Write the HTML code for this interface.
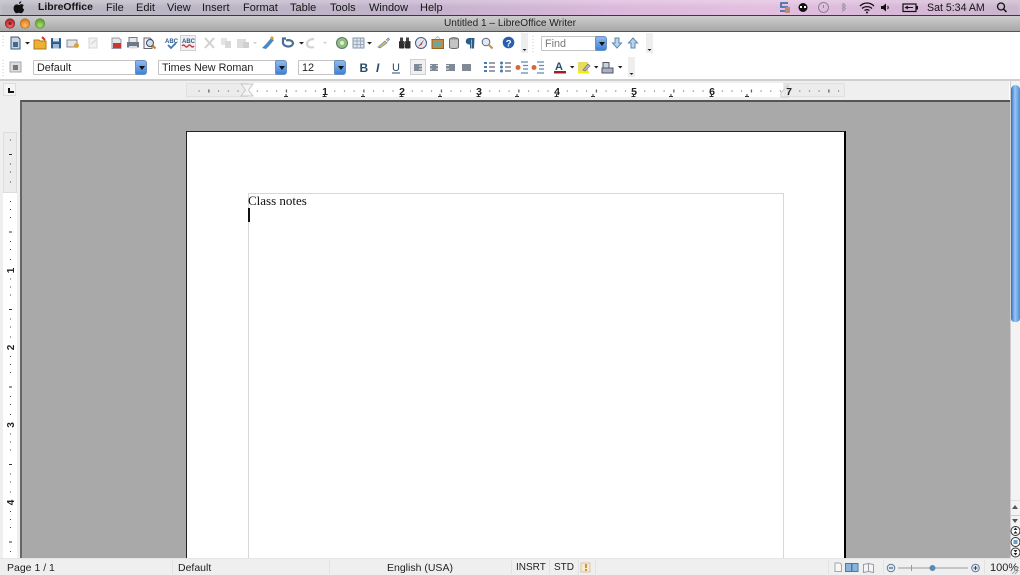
<!DOCTYPE html>
<html><head><meta charset="utf-8"><style>
html,body{margin:0;padding:0;width:1020px;height:575px;overflow:hidden;background:#fff}
body{position:relative;font-family:"Liberation Sans",sans-serif;font-size:11px;color:#1a1a1a;filter:blur(.3px)}
div,span{position:absolute;white-space:nowrap}
#menu{left:0;top:0;width:1020px;height:15px;background:linear-gradient(90deg,#b9b7c2 0,#bcb5c6 25%,#c3b2cc 40%,#dcb8dc 60%,#e3bfe0 75%,#d8b8d8 88%,#c9b6cc 100%);box-shadow:inset 0 4px 4px rgba(255,255,255,.25);border-bottom:1px solid #3a3a3a}
.m{top:1px;font-size:11px;line-height:14px;color:#151515}
#title{left:0;top:16px;width:1020px;height:15px;background:linear-gradient(#cdcdcd,#a8a8a8);border-bottom:1px solid #555;text-align:center;font-size:10.1px;line-height:15px;color:#222}
.combo{height:15px;background:#fff;border:1px solid #c4c4c4;box-sizing:border-box;font-size:10.8px;line-height:14px;padding-left:3px;color:#222;border-radius:1px}
.btn{width:12px;height:15px;background:linear-gradient(#8fb9ec,#3f82d8);border-radius:2px 3px 3px 2px;border:1px solid #6b8fbe;box-sizing:border-box}
.btn:after{content:"";position:absolute;left:2.5px;top:5px;border:3px solid transparent;border-top:4px solid #111;border-bottom:0}
.st{top:561px;font-size:10.5px;line-height:14px;color:#222}
</style></head><body>
<div id="menu"></div>
<svg style="position:absolute;left:13px;top:1px" width="12" height="13" viewBox="0 0 12 13"><path d="M8 3.2C9.2 3 10.3 3.6 10.8 4.4 9.2 5.4 9.5 7.800 11.200 8.500 10.600 10.200 9.400 12.300 8 12.300 7.100 12.300 6.800 11.800 5.800 11.800 4.800 11.800 4.400 12.300 3.600 12.300 2.100 12.300 .6 9.600 .6 7.400 .6 5 2.100 3.400 3.800 3.400 4.800 3.400 5.400 4 6 4 6.600 4 7 3.400 8 3.200ZM8.300 .3C8.400 1.600 7.200 3 6 2.900 5.900 1.700 7 .4 8.300 .3Z" fill="#111"/></svg>
<span class="m" style="left:38px;font-weight:bold;font-size:10.4px">LibreOffice</span>
<span class="m" style="left:106px">File</span>
<span class="m" style="left:136px">Edit</span>
<span class="m" style="left:167px">View</span>
<span class="m" style="left:202px">Insert</span>
<span class="m" style="left:243px">Format</span>
<span class="m" style="left:290px">Table</span>
<span class="m" style="left:330px">Tools</span>
<span class="m" style="left:369px">Window</span>
<span class="m" style="left:420px">Help</span>
<span class="m" style="left:927px;font-size:10.6px">Sat 5:34 AM</span>
<svg style="position:absolute;left:778px;top:0" width="242" height="15" viewBox="778 0 242 15">
<path d="M788 3h-7v4h6v4h-7" fill="none" stroke="#4a6fa8" stroke-width="1.800"/><rect x="785" y="7" width="5" height="6" rx="1" fill="#c08a70"/>
<circle cx="803" cy="7.500" r="4.500" fill="#111"/><rect x="800" y="6" width="2" height="2" fill="#fff"/><rect x="804" y="6" width="2" height="2" fill="#fff"/>
<circle cx="823.500" cy="7.500" r="5" fill="none" stroke="#8d8296"/><path d="M823.500 5v3" stroke="#8d8296"/>
<path d="M843 3l2.500 2.500-3.500 3.500M842 5l3.500 3.500-2.500 2.500V3" fill="none" stroke="#a295a8"/>
<path d="M860 6c4-4 10-4 14 0M862 8.500c3-2.500 7-2.500 10 0M864.500 10.500c1.500-1 3.500-1 5 0" fill="none" stroke="#111" stroke-width="1.300"/><circle cx="867" cy="12.500" r="1" fill="#111"/>
<path d="M881 6h2l3-2.500v8l-3-2.500h-2z" fill="#111"/><path d="M887.500 6c1 1 1 2 0 3" fill="none" stroke="#111"/>
<rect x="903" y="4" width="13" height="7.500" fill="none" stroke="#111" stroke-width="1.200"/><rect x="916" y="6" width="2" height="3.500" fill="#111"/><path d="M906 7.500h7M908 6l-2.500 1.500 2.500 1.500" stroke="#111" fill="none"/>
<circle cx="1001" cy="6.500" r="3.500" fill="none" stroke="#111" stroke-width="1.300"/><path d="M1003.500 9l3 3" stroke="#111" stroke-width="1.500"/>
</svg>
<div id="title">Untitled 1 – LibreOffice Writer</div>
<svg style="position:absolute;left:0;top:16px" width="50" height="15"><defs><radialGradient id="r" cx=".5" cy=".7" r=".6"><stop offset="0" stop-color="#f07070"/><stop offset="1" stop-color="#c02028"/></radialGradient><radialGradient id="o" cx=".5" cy=".7" r=".6"><stop offset="0" stop-color="#fcc060"/><stop offset="1" stop-color="#e07818"/></radialGradient><radialGradient id="g" cx=".5" cy=".7" r=".6"><stop offset="0" stop-color="#a8e070"/><stop offset="1" stop-color="#60a030"/></radialGradient></defs><circle cx="10" cy="7.500" r="4.800" fill="url(#r)" stroke="#7a3034" stroke-width=".6"/><circle cx="25" cy="7.500" r="4.800" fill="url(#o)" stroke="#a4702c" stroke-width=".6"/><circle cx="40" cy="7.500" r="4.800" fill="url(#g)" stroke="#5e8c3c" stroke-width=".6"/><circle cx="10" cy="7.500" r="1.500" fill="#7a1f24"/></svg>

<div style="left:0;top:32px;width:1020px;height:48px;background:#fff"></div>
<div style="left:0;top:79px;width:1020px;height:2px;background:#cfcfcf"></div>

<!-- toolbar icons -->
<svg style="position:absolute;left:0;top:32px" width="660" height="48" viewBox="0 32 660 48">
<path d="M3 36v10M3 60v12" stroke="#ccc" stroke-dasharray="1 2"/>
<path d="M11 37h7l2 2v10h-9z" fill="#c8d6e4" stroke="#3c5a78"/><rect x="13" y="42" width="5" height="5" fill="#46688a"/>
<path d="M25 42h5l-2.500 2.500z" fill="#222"/>
<path d="M34 40h5l1 1h6v8H34z" fill="#f0b030" stroke="#b07818"/><path d="M42 37l3 3" stroke="#d83020" stroke-width="2"/>
<rect x="51" y="38" width="10" height="10.500" rx="1" fill="#2f5c88"/><rect x="53" y="38" width="6" height="3.500" fill="#dce6f0"/><rect x="53" y="44" width="6" height="4.500" fill="#9cb8d4"/>
<rect x="67" y="40" width="10" height="7" fill="#e4e4e4" stroke="#889"/><circle cx="76.500" cy="45.500" r="2.500" fill="#e0a030"/>
<path d="M89 38h8v10h-8z" fill="#f2f2f2" stroke="#d4d4d4"/><path d="M91 44l5-4" stroke="#ddd" stroke-width="2"/>
<path d="M112 38h7l2 2v8.500h-9z" fill="#e6e6e6" stroke="#99a"/><rect x="113" y="43" width="8" height="5" fill="#c83830"/>
<rect x="127" y="42" width="12" height="5.500" fill="#6a7a8c"/><rect x="129" y="37.500" width="8" height="5" fill="#e8e8e8" stroke="#778"/><rect x="129" y="46" width="8" height="2.500" fill="#ddd"/>
<path d="M144 38h6l2 2v8.500h-8z" fill="#f4f4f4" stroke="#667"/><circle cx="150" cy="43" r="3.500" fill="#cfe0f0" stroke="#445"/><path d="M152.500 45.500l3 3" stroke="#c08020" stroke-width="2"/>
<text x="165" y="43" font-size="6" font-weight="bold" fill="#2a5a90" font-family="Liberation Sans">ABC</text><path d="M168 45l3 3 5-5" stroke="#3a78b8" stroke-width="1.800" fill="none"/>
<rect x="180.500" y="35.500" width="15" height="15" fill="#f0f0f0" stroke="#d0d0d0"/><text x="182" y="43" font-size="6" font-weight="bold" fill="#2a5a90" font-family="Liberation Sans">ABC</text><path d="M182 46q1.500-2 3 0t3 0 3 0 3 0" stroke="#d03030" fill="none" stroke-width="1.400"/>
<path d="M205 38l9 10M214 38l-9 10" stroke="#d0d0d0" stroke-width="2"/>
<rect x="221" y="38" width="6" height="7" fill="#e4e4e4"/><rect x="225" y="41" width="6" height="7" fill="#d8d8d8"/>
<rect x="237" y="39" width="9" height="9" fill="#dcdcdc"/><rect x="243" y="42" width="6" height="6" fill="#cfcfcf"/><path d="M253 42h4l-2 2z" fill="#ccc"/>
<path d="M262 48l4-4 3 2-3 3zM266 44l5-6 3 2-5 6z" fill="#4a88c8"/><path d="M270 38l2-2 2 2-2 2z" fill="#d8a030"/>
<path d="M286 38.500h-3v5c2 4 9 4 10 0 0-3-4-4-7-3" fill="none" stroke="#4a6f98" stroke-width="2.200"/><path d="M299 42h5l-2.500 2.500z" fill="#222"/>
<path d="M314 39c-4 0-7 2-7 5s4 4 7 3" fill="none" stroke="#d4d4d4" stroke-width="2.200"/><path d="M323 42h4l-2 2z" fill="#ccc"/>
<circle cx="342" cy="43" r="5.500" fill="#8cc07c" stroke="#5a7a6a"/><circle cx="342" cy="43" r="2" fill="#e8e8d8"/>
<rect x="353" y="38" width="11" height="10" fill="#dde3ea" stroke="#8a9aac"/><path d="M353 41h11M353 44.500h11M357 38v10M360.500 38v10" stroke="#8a9aac" stroke-width=".7"/><path d="M367 42h5l-2.500 2.500z" fill="#222"/>
<path d="M378 47l7-6 2 2-7 5zM386 40l2.500-2 1 1.500-2 2" fill="#e8b850" stroke="#5a88c0" stroke-width=".7"/>
<rect x="399" y="41" width="5.500" height="7.500" rx="1" fill="#2c2c2c"/><rect x="405" y="41" width="5.500" height="7.500" rx="1" fill="#2c2c2c"/><rect x="400" y="37.500" width="3" height="4" fill="#444"/><rect x="406" y="37.500" width="3" height="4" fill="#444"/><rect x="403" y="42" width="3" height="2" fill="#555"/>
<circle cx="421" cy="43" r="5.500" fill="#dfe8f2" stroke="#4a5a80"/><path d="M418 46.500l6-7-2.500 5.500z" fill="#d04030"/>
<rect x="432" y="39.500" width="11.500" height="9" fill="#c88a3c" stroke="#9a6020"/><rect x="434" y="41.500" width="7.500" height="5" fill="#6aa8a0"/><path d="M435 39l2.500-2.500L440 39" stroke="#bbb" fill="none"/>
<ellipse cx="454" cy="39.500" rx="4.500" ry="1.800" fill="#999" stroke="#666"/><path d="M449.500 39.500V47c0 1 2 1.500 4.500 1.500s4.500-.5 4.500-1.500V39.500" fill="#c4c4c4" stroke="#666"/>
<path d="M474.500 38h-5.500a3 3 0 0 0 0 6.500h1v4h1.500V39.500H472V48.500h2z" fill="#2f5c88"/>
<circle cx="486" cy="42" r="3.800" fill="#dfeaf5" stroke="#667"/><path d="M489 45l3.500 3.500" stroke="#c89030" stroke-width="2"/>
<circle cx="508.500" cy="42.500" r="5.800" fill="#2a5fb0"/><text x="505.700" y="46.500" font-size="9.500" font-weight="bold" fill="#fff" font-family="Liberation Sans">?</text>
<rect x="521" y="33" width="7" height="20" fill="#eee"/><path d="M522.500 49h4l-2 2z" fill="#222"/>
<path d="M533 36v16" stroke="#ccc" stroke-dasharray="1 2"/>
<path d="M615 38h4v5h2.500l-4.500 5-4.500-5H615z" fill="#bcd4ea" stroke="#5a88b4"/>
<path d="M631 48h4v-5h2.500L633 38l-4.500 5H631z" fill="#bcd4ea" stroke="#5a88b4"/>
<rect x="646" y="33" width="7" height="20" fill="#eee"/><path d="M647.500 49h4l-2 2z" fill="#222"/>

<path d="M3 60v16" stroke="#ccc" stroke-dasharray="1 2"/>
<rect x="10" y="62" width="11" height="10" fill="#dcdcdc" stroke="#a8a8a8"/><rect x="13" y="65" width="5" height="5" fill="#777"/>
<text x="359.500" y="72" font-size="12" font-weight="bold" fill="#2a4a68" font-family="Liberation Sans">B</text>
<text x="376" y="72" font-size="12" font-style="italic" font-weight="bold" fill="#2a4a68" font-family="Liberation Sans">I</text>
<text x="392" y="71" font-size="11" fill="#2a4a68" font-family="Liberation Sans">U</text><path d="M392 73h8" stroke="#2a4a68"/>
<rect x="410.500" y="59.500" width="15" height="15" fill="#f0f0f0" stroke="#d0d0d0"/>
<g fill="#7f8a96"><rect x="414" y="64" width="8" height="7"/><rect x="430" y="64" width="8" height="7"/><rect x="446" y="64" width="9" height="7"/><rect x="462" y="64" width="9" height="7"/></g>
<g stroke="#fff" stroke-width=".8"><path d="M419 66h4M419 69h4M430 65.500h2M436 65.500h2M430 69h2M436 69h2M446 65.500h3M446 69h3"/></g>
<g fill="#4a7aa8"><rect x="484" y="62" width="3" height="2"/><rect x="484" y="66" width="3" height="2"/><rect x="484" y="70" width="3" height="2"/><circle cx="501.500" cy="63" r="1.500"/><circle cx="501.500" cy="67" r="1.500"/><circle cx="501.500" cy="71" r="1.500"/></g>
<path d="M489 63h6M489 67h6M489 71h6M505 63h6M505 67h6M505 71h6" stroke="#667" stroke-width="1.200"/>
<path d="M521 62h7M521 73h7M523 65.500h5M523 69h5M537 62h7M537 73h7M539 65.500h5M539 69h5" stroke="#5a8ab8" stroke-width="1.300"/>
<circle cx="518" cy="67.500" r="2.500" fill="#d86838"/><circle cx="534" cy="67.500" r="2.500" fill="#d86838"/>
<text x="555" y="70" font-size="11" font-weight="bold" fill="#2a4a78" font-family="Liberation Sans">A</text><rect x="554" y="71" width="12" height="2.500" fill="#a02020"/>
<path d="M570 66h4.500l-2.250 2.500zM594 66h4.500l-2.250 2.500zM618 66h4.500l-2.250 2.500z" fill="#222"/>
<rect x="578" y="62" width="10" height="9" fill="#e8dc60"/><rect x="578" y="71" width="11" height="2.500" fill="#f4f000"/><path d="M583 70l5-6 2 2-5 5z" fill="#bbb" stroke="#666" stroke-width=".6"/>
<rect x="603" y="62.500" width="6" height="5.500" fill="#c8d4dc" stroke="#556"/><rect x="602" y="68" width="11" height="5" fill="#a8b4bc" stroke="#556"/>
<rect x="628" y="57" width="7" height="20" fill="#eee"/><path d="M629.500 73h4l-2 2z" fill="#222"/>
</svg>

<div class="combo" style="left:33px;top:60px;width:104px">Default</div><div class="btn" style="left:135px;top:60px"></div>
<div class="combo" style="left:158px;top:60px;width:120px">Times New Roman</div><div class="btn" style="left:275px;top:60px"></div>
<div class="combo" style="left:298px;top:60px;width:38px">12</div><div class="btn" style="left:334px;top:60px"></div>
<div class="combo" style="left:541px;top:36px;width:56px;color:#777">Find</div><div class="btn" style="left:595px;top:36px"></div>

<!-- ruler -->
<div style="left:0;top:81px;width:1009px;height:20px;background:#efefef"></div>
<div style="left:0;top:100px;width:21px;height:458px;background:#efefef"></div>
<div style="left:3px;top:83px;width:13px;height:13px;background:#f4f4f4;border:1px solid #ddd;box-sizing:border-box"></div>
<div style="left:8px;top:88px;width:6px;height:5px;border-left:2px solid #111;border-bottom:2px solid #111;box-sizing:border-box"></div>
<div style="left:186px;top:83px;width:659px;height:14px;background:#ececec;border:1px solid #e0e0e0;box-sizing:border-box"></div>
<div style="left:248px;top:83px;width:535px;height:14px;background:#fff"></div>
<svg style="position:absolute;left:0;top:81px" width="1009" height="20" viewBox="0 81 1009 20">
<defs><pattern id="d" x="247.600" y="81" width="77.500" height="20" patternUnits="userSpaceOnUse">
<rect x="9.200" y="9.500" width="1" height="1" fill="#444"/><rect x="18.900" y="9.500" width="1" height="1" fill="#444"/><rect x="28.500" y="9.500" width="1" height="1" fill="#444"/><rect x="38.300" y="8.500" width="1" height="3" fill="#333"/><rect x="48" y="9.500" width="1" height="1" fill="#444"/><rect x="57.700" y="9.500" width="1" height="1" fill="#444"/><rect x="67.400" y="9.500" width="1" height="1" fill="#444"/></pattern></defs>
<rect x="190" y="81" width="650" height="20" fill="url(#d)"/>
<path d="M241 84h12l-4.500 6 4.500 6h-12l4.500-6z" fill="#f4f4f4" stroke="#c8c8c8"/>
<path d="M781 97v-4l7-8v12z" fill="#f0f0f0" stroke="#ccc"/><path d="M784.500 84h1v13h-1" fill="#ddd"/>
<g fill="#333"><path d="M285.500 94v2h-1.500v1h4v-1h-1.500v-2zM362.500 94v2H361v1h4v-1h-1.500v-2zM439.500 94v2H438v1h4v-1h-1.500v-2zM516.500 94v2H515v1h4v-1h-1.500v-2zM592.500 94v2H591v1h4v-1h-1.500v-2zM670.500 94v2H669v1h4v-1h-1.500v-2zM746.500 94v2H745v1h4v-1h-1.500v-2zM324 94v2h-1.500v1h4v-1H325v-2zM401 94v2h-1.500v1h4v-1H402v-2zM478 94v2h-1.500v1h4v-1H479v-2zM556 94v2h-1.500v1h4v-1H557v-2zM633 94v2h-1.500v1h4v-1H634v-2zM711 94v2h-1.500v1h4v-1H712v-2z"/></g>
<g font-family="Liberation Sans" font-size="10.500" font-weight="bold" fill="#222" text-anchor="middle"><text x="325" y="95">1</text><text x="402" y="95">2</text><text x="479" y="95">3</text><text x="557" y="95">4</text><text x="634" y="95">5</text><text x="712" y="95">6</text><text x="789" y="95">7</text></g>
</svg>
<div style="left:3px;top:132px;width:14px;height:61px;background:#ececec;border:1px solid #ddd;box-sizing:border-box"></div>
<div style="left:3px;top:193px;width:14px;height:365px;background:#fff"></div>
<svg style="position:absolute;left:0;top:132px" width="21" height="426" viewBox="0 132 21 426">
<defs><pattern id="v" x="0" y="193" width="21" height="77.500" patternUnits="userSpaceOnUse">
<rect x="10" y="8" width="1" height="1" fill="#444"/><rect x="10" y="16" width="1" height="1" fill="#444"/><rect x="10" y="24" width="1" height="1" fill="#444"/><rect x="9" y="38.500" width="3" height="1" fill="#333"/><rect x="10" y="48" width="1" height="1" fill="#444"/><rect x="10" y="56" width="1" height="1" fill="#444"/><rect x="10" y="66" width="1" height="1" fill="#444"/></pattern></defs>
<rect x="3" y="136" width="14" height="422" fill="url(#v)"/>
<g font-family="Liberation Sans" font-size="10" font-weight="bold" fill="#222" text-anchor="middle"><text transform="translate(14,270.500) rotate(-90)">1</text><text transform="translate(14,347.500) rotate(-90)">2</text><text transform="translate(14,425) rotate(-90)">3</text><text transform="translate(14,502.500) rotate(-90)">4</text></g>
</svg>

<!-- workspace -->
<div style="left:20px;top:100px;width:990px;height:458px;background:#a9a9a9;border-left:2px solid #666;border-top:2px solid #555;box-sizing:border-box"></div>
<div style="left:186px;top:131px;width:660px;height:427px;background:#fff;border-left:1px solid #222;border-top:1px solid #222;border-right:2px solid #000;box-sizing:border-box"></div>
<div style="left:248px;top:193px;width:536px;height:365px;border:1px solid #d8d8d8;border-bottom:0;box-sizing:border-box"></div>
<div style="left:248px;top:193px;font-family:'Liberation Serif',serif;font-size:13px;line-height:15px;color:#111">Class notes</div>
<div style="left:248px;top:208px;width:1.500px;height:14px;background:#111"></div>

<!-- scrollbar -->
<div style="left:1010px;top:81px;width:10px;height:477px;background:#f3f3f3;border-left:1px solid #cfcfcf;box-sizing:border-box"></div>
<div style="left:1011px;top:85px;width:9px;height:237px;border-radius:5px 5px 4px 4px;background:linear-gradient(90deg,#2f70c4,#9cc6f2 45%,#4a8cd8)"></div>
<svg style="position:absolute;left:1010px;top:500px" width="10" height="58" viewBox="0 0 10 58">
<path d="M.5 0h10" stroke="#ccc"/><path d="M5 5l3 4H2z" fill="#555"/><path d="M0 15.500h10" stroke="#ccc"/><path d="M5 23l-3-4h6z" fill="#555"/>
<g fill="#fff" stroke="#333"><circle cx="5.500" cy="31" r="4.500"/><circle cx="5.500" cy="42" r="4.500"/><circle cx="5.500" cy="52.500" r="4.500"/></g>
<path d="M5.500 27.500l2 2.500h-4zM5.500 31l2 2.500h-4zM3.500 50h4l-2 2.500zM3.500 53h4l-2 2.500z" fill="#222"/><rect x="3.500" y="40" width="4" height="4" fill="#6a9ac8"/>
</svg>

<!-- status -->
<div style="left:0;top:558px;width:1020px;height:17px;background:#efefef;border-top:1px solid #e4e4e4;box-sizing:border-box"></div>
<span class="st" style="left:7px">Page 1 / 1</span>
<span class="st" style="left:178px">Default</span>
<span class="st" style="left:387px">English (USA)</span>
<span class="st" style="left:516px;font-size:10px">INSRT</span>
<span class="st" style="left:554px;font-size:10px">STD</span>
<span class="st" style="left:990px;font-size:11px">100%</span>
<svg style="position:absolute;left:0;top:558px" width="1020" height="17" viewBox="0 558 1020 17">
<path d="M172.500 560v14M329.500 560v14M511.500 560v14M549.500 560v14M578.500 560v14M595.500 560v14M828.500 560v14M883.500 560v14M984.500 560v14" stroke="#e2e2e2"/>
<rect x="581" y="563" width="9" height="9" fill="#f4ecd8" stroke="#d8c8a0"/><rect x="585" y="564" width="2" height="4" fill="#d89030"/><rect x="585" y="569" width="2" height="2" fill="#d89030"/>
<path d="M835 563h5l1.500 1.500v7H835z" fill="#f8f8f8" stroke="#9aa"/>
<rect x="845.500" y="563.500" width="6" height="8" fill="#8ab4dc" stroke="#4a78a8"/><rect x="852" y="563.500" width="6" height="8" fill="#8ab4dc" stroke="#4a78a8"/>
<path d="M863.500 564.500l5-1v8l-5 1zM868.500 563.500l5 1v8l-5-1z" fill="#f4f4f4" stroke="#99a"/>
<circle cx="891" cy="568" r="3.800" fill="#dfe6ee" stroke="#5a7a98"/><path d="M889 568h4" stroke="#345"/>
<path d="M898 568h70" stroke="#999"/><path d="M911.500 565v6" stroke="#999"/>
<circle cx="932.500" cy="568" r="3" fill="#5a8ab0"/>
<circle cx="975.500" cy="568" r="3.800" fill="#dfe6ee" stroke="#5a7a98"/><path d="M973.500 568h4M975.500 566v4" stroke="#345"/>
<path d="M1012 574l7-7M1015 574l4-4" stroke="#aaa"/>
</svg>
</body></html>
